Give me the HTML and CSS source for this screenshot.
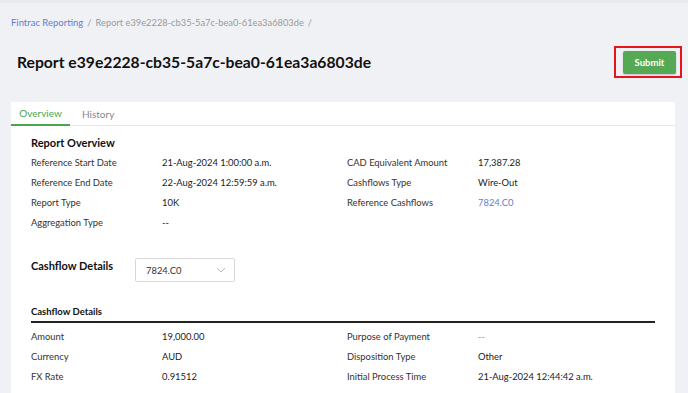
FILE: index.html
```html
<!DOCTYPE html>
<html>
<head>
<meta charset="utf-8">
<link rel="stylesheet" href="styles.css">
</head>
<body>
<div class="topband"></div>
<div class="page">
  <nav class="crumbs">
    <a class="crumb-link">Fintrac Reporting</a>
    <span class="sep">/</span>
    <span class="crumb">Report e39e2228-cb35-5a7c-bea0-61ea3a6803de</span>
    <span class="sep">/</span>
  </nav>
  <header class="head">
    <h1 class="title">Report e39e2228-cb35-5a7c-bea0-61ea3a6803de</h1>
    <span class="highlight"><button class="submit">Submit</button></span>
  </header>
  <section class="card">
    <div class="tabs">
      <div class="tab active">Overview</div>
      <div class="tab">History</div>
    </div>
    <div class="body">
      <h2 class="sec-title">Report Overview</h2>
      <div class="grid">
        <div class="lbl">Reference Start Date</div><div class="val">21-Aug-2024 1:00:00 a.m.</div>
        <div class="lbl">CAD Equivalent Amount</div><div class="val">17,387.28</div>
        <div class="lbl">Reference End Date</div><div class="val">22-Aug-2024 12:59:59 a.m.</div>
        <div class="lbl">Cashflows Type</div><div class="val">Wire-Out</div>
        <div class="lbl">Report Type</div><div class="val">10K</div>
        <div class="lbl">Reference Cashflows</div><div class="val link">7824.C0</div>
        <div class="lbl">Aggregation Type</div><div class="val">--</div>
        <div class="lbl"></div><div class="val"></div>
      </div>
      <div class="cf-head">
        <h2 class="sec-title">Cashflow Details</h2>
        <div class="select">
          <span>7824.C0</span>
          <svg class="chev" width="10" height="6" viewBox="0 0 10 6"><path d="M1 1l4 4 4-4" fill="none" stroke="#bbb" stroke-width="1"/></svg>
        </div>
      </div>
      <h3 class="sub-title">Cashflow Details</h3>
      <div class="grid">
        <div class="lbl">Amount</div><div class="val">19,000.00</div>
        <div class="lbl">Purpose of Payment</div><div class="val muted">--</div>
        <div class="lbl">Currency</div><div class="val">AUD</div>
        <div class="lbl">Disposition Type</div><div class="val">Other</div>
        <div class="lbl">FX Rate</div><div class="val">0.91512</div>
        <div class="lbl">Initial Process Time</div><div class="val">21-Aug-2024 12:44:42 a.m.</div>
        <div class="lbl">CAD Amount</div><div class="val">17,387.28</div>
        <div class="lbl">Completion Time</div><div class="val">21-Aug-2024 12:44:42 a.m.</div>
      </div>
    </div>
  </section>
</div>
</body>
</html>
```

FILE: styles.css
```css
* { box-sizing: border-box; margin: 0; padding: 0; }
html, body { height: 100%; }
body {
  background: #f0f1f5;
  font-family: Lato, "Open Sans", Arial, sans-serif;
  color: #222;
  overflow: hidden;
}
.topband { height: 3px; background: #e9eaee; }
.page { padding: 0 13px 0 11px; }
.crumbs {
  display: flex;
  align-items: center;
  gap: 4px;
  height: 37px;
  padding-top: 1px;
  font-size: 9.3px;
  color: #9a9a9a;
}
.crumb-link { color: #5b7fd6; font-size: 9.5px; }
.head {
  display: flex;
  align-items: center;
  justify-content: space-between;
  height: 44px;
  padding-left: 6px;
}
.title { font-size: 15.7px; font-weight: 700; color: #111; }
.highlight {
  display: inline-flex;
  border: 2px solid #e8131d;
  padding: 3px 4px 2px 7px;
  margin-right: -7px;
}
.submit {
  width: 53px;
  height: 23px;
  background: #55a854;
  color: #fff;
  border: none;
  border-radius: 2px;
  font-family: Lato, sans-serif;
  font-weight: 700;
  font-size: 9.5px;
  box-shadow: 0 1px 2px rgba(0,0,0,0.2);
}
.card {
  margin-top: 18px;
  background: #fff;
  min-height: 400px;
}
.tabs {
  display: flex;
  height: 24px;
  border-bottom: 1px solid #e6e8ec;
}
.tab {
  display: flex;
  align-items: center;
  padding: 0 9px;
  font-size: 10px;
  color: #888;
  margin-bottom: -1px;
}
.tab.active {
  color: #4aa64a;
  border-bottom: 2px solid #4aa64a;
  width: 59px;
  justify-content: center;
  margin-right: 3px;
}
.body { padding: 8px 20px 0 20px; }
.sec-title { font-size: 11px; font-weight: 700; color: #111; line-height: 18px; }
.grid {
  display: grid;
  grid-template-columns: 131px 185px 131px auto;
  grid-auto-rows: 20px;
  font-size: 9.4px;
  align-items: center;
  color: #333;
}
.grid .val { color: #222; }
.val.link { color: #5b7fd6; }
.val.muted { color: #999; }
.cf-head {
  display: flex;
  align-items: flex-start;
  margin-top: 24px;
}
.cf-head .sec-title { width: 104px; padding-top: 1px; }
.select {
  width: 100px;
  height: 24px;
  margin-top: 2px;
  border: 1px solid #d9d9d9;
  border-radius: 2px;
  display: flex;
  align-items: center;
  justify-content: space-between;
  padding: 0 8px 0 10px;
  font-size: 9.4px;
  color: #333;
}
.sub-title {
  margin-top: 24px;
  font-size: 9.5px;
  font-weight: 700;
  color: #111;
  padding-bottom: 4px;
  border-bottom: 2px solid #222;
  margin-bottom: 3px;
}
```
